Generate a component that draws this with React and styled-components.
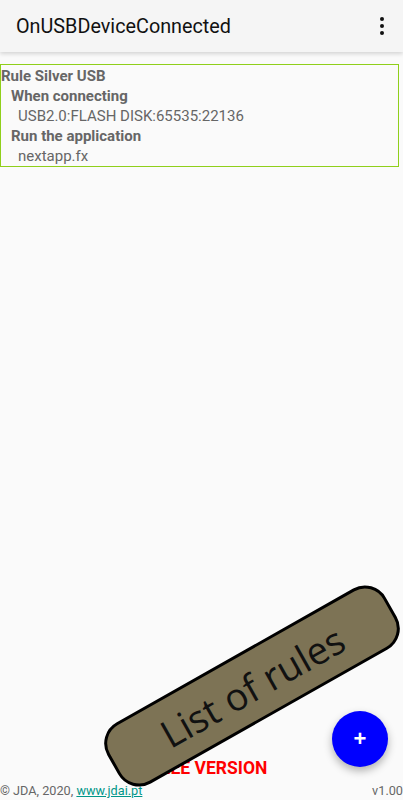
import styled, { createGlobalStyle } from 'styled-components';

const GlobalStyle = createGlobalStyle`
  html, body {
    margin: 0;
    padding: 0;
    background: #fafafa;
    font-family: Roboto, "Liberation Sans", sans-serif;
  }
`;

const Screen = styled.div`
  position: relative;
  width: 403px;
  height: 800px;
  overflow: hidden;
  display: flex;
  flex-direction: column;
  background: #fafafa;
`;

const AppBar = styled.header`
  height: 52px;
  flex-shrink: 0;
  display: flex;
  align-items: center;
  justify-content: space-between;
  padding: 0 12px 0 16px;
  background: #f5f5f5;
  box-shadow: 0 2px 4px rgba(0, 0, 0, 0.15);
  z-index: 1;
`;

const Title = styled.h1`
  margin: 0;
  font-size: 19.8px;
  font-weight: 400;
  color: #111;
`;

const Kebab = styled.div`
  display: flex;
  flex-direction: column;
  gap: 3px;
  padding: 6px 7px 6px 9px;

  span {
    width: 4px;
    height: 4px;
    border-radius: 50%;
    background: #111;
  }
`;

const Content = styled.main`
  flex: 1;
  padding: 12px 4px 0 0;
`;

const RuleCard = styled.section`
  border: 1px solid #8fcf1a;
  padding-top: 1px;
  display: flex;
  flex-direction: column;
`;

const Line = styled.div`
  font-size: 15px;
  line-height: 20px;
  color: #666;
  font-weight: ${(p) => (p.bold ? 700 : 400)};
  padding-left: ${(p) => p.indent}px;
`;

const Footer = styled.footer`
  height: 60px;
  flex-shrink: 0;
  display: flex;
  flex-direction: column;
  justify-content: flex-end;
`;

const Edition = styled.div`
  text-align: center;
  color: #ff0000;
  font-weight: 700;
  font-size: 17.5px;
  margin: 0 0 5px 14px;
`;

const Credits = styled.div`
  display: flex;
  justify-content: space-between;
  font-size: 12.7px;
  color: #666;
  padding: 0 0 2px 0;

  a {
    color: #009688;
  }
`;

const Fab = styled.button`
  position: absolute;
  left: 332px;
  top: 711px;
  width: 56px;
  height: 56px;
  border: none;
  border-radius: 50%;
  background: #0000ff;
  color: #fff;
  font-size: 22px;
  font-weight: 700;
  display: flex;
  align-items: center;
  justify-content: center;
  box-shadow: 0 4px 8px rgba(0, 0, 0, 0.3);
  z-index: 2;
`;

const Banner = styled.div`
  position: absolute;
  left: 92px;
  top: 651px;
  width: 320px;
  height: 70px;
  box-sizing: border-box;
  border: 3.5px solid #000;
  border-radius: 24px;
  background: #7d7355;
  transform: rotate(-29.5deg);
  display: flex;
  align-items: center;
  justify-content: center;
  font-family: "Open Sans", "Noto Sans", sans-serif;
  font-size: 38px;
  color: #111;
  z-index: 3;
`;

export default function App() {
  return (
    <Screen>
      <GlobalStyle />
      <AppBar>
        <Title>OnUSBDeviceConnected</Title>
        <Kebab>
          <span />
          <span />
          <span />
        </Kebab>
      </AppBar>
      <Content>
        <RuleCard>
          <Line bold indent={0}>Rule Silver USB</Line>
          <Line bold indent={10}>When connecting</Line>
          <Line indent={17}>USB2.0:FLASH DISK:65535:22136</Line>
          <Line bold indent={10}>Run the application</Line>
          <Line indent={17}>nextapp.fx</Line>
        </RuleCard>
      </Content>
      <Footer>
        <Edition>FREE VERSION</Edition>
        <Credits>
          <span>
            © JDA, 2020, <a href="#">www.jdai.pt</a>
          </span>
          <span>v1.00</span>
        </Credits>
      </Footer>
      <Fab>+</Fab>
      <Banner>List of rules</Banner>
    </Screen>
  );
}
